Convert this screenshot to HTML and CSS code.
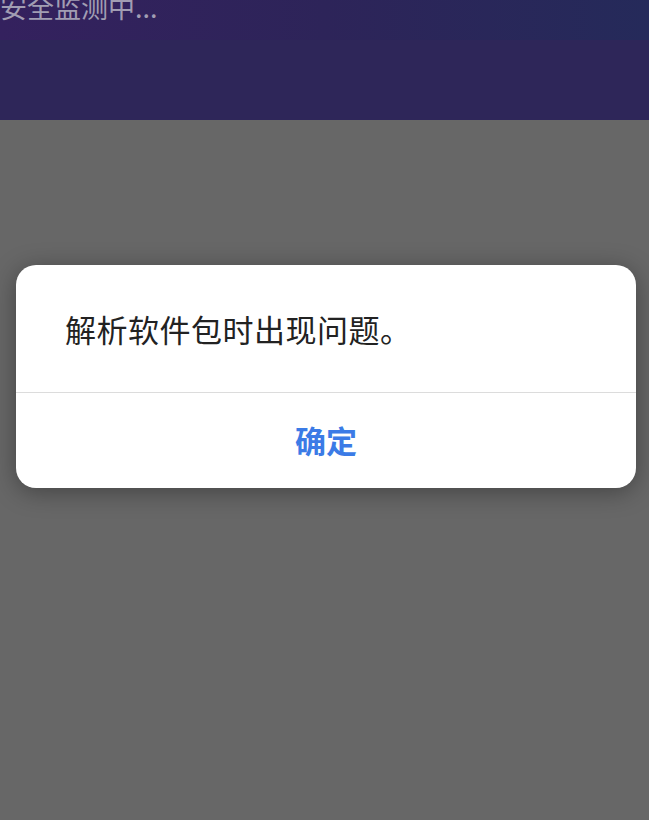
FILE: index.html
```html
<!DOCTYPE html>
<html lang="zh-CN">
<head>
  <meta charset="UTF-8">
  <meta name="viewport" content="width=device-width, initial-scale=1.0">
  <title>安全监测</title>
  <link rel="stylesheet" href="styles.css">
</head>
<body>
  <div class="header">
    <div class="status">安全监测中...</div>
  </div>
  <div class="overlay">
    <div class="dialog">
      <div class="dialog-message">解析软件包时出现问题。</div>
      <button class="dialog-btn">确定</button>
    </div>
  </div>
</body>
</html>
```

FILE: styles.css
```css
* {
  margin: 0;
  padding: 0;
  box-sizing: border-box;
}

html, body {
  height: 100%;
}

body {
  font-family: "Noto Sans CJK SC", "Noto Sans", sans-serif;
  background-color: #676767;
  overflow: hidden;
}

.header {
  height: 120px;
  background-color: #2e2659;
  overflow: hidden;
}

.status {
  height: 50px;
  margin-top: -10px;
  font-size: 27px;
  line-height: 34px;
  color: #a19db3;
  background: linear-gradient(90deg, #34215e 0%, #2d2459 50%, #252a5a 100%);
}

.overlay {
  height: calc(100% - 120px);
  padding: 145px 13px 0 16px;
}

.dialog {
  background-color: #fff;
  border-radius: 20px;
  box-shadow: 0 4px 24px rgba(0, 0, 0, 0.35);
  overflow: hidden;
}

.dialog-message {
  height: 128px;
  padding: 44px 49px 0;
  font-size: 31px;
  line-height: 40px;
  letter-spacing: 0.5px;
  color: #222;
  border-bottom: 1px solid #dcdcdc;
}

.dialog-btn {
  display: block;
  width: 100%;
  height: 95px;
  border: none;
  background: none;
  font-family: inherit;
  font-size: 31px;
  font-weight: bold;
  color: #3b7be6;
  padding-bottom: 2px;
}
```
